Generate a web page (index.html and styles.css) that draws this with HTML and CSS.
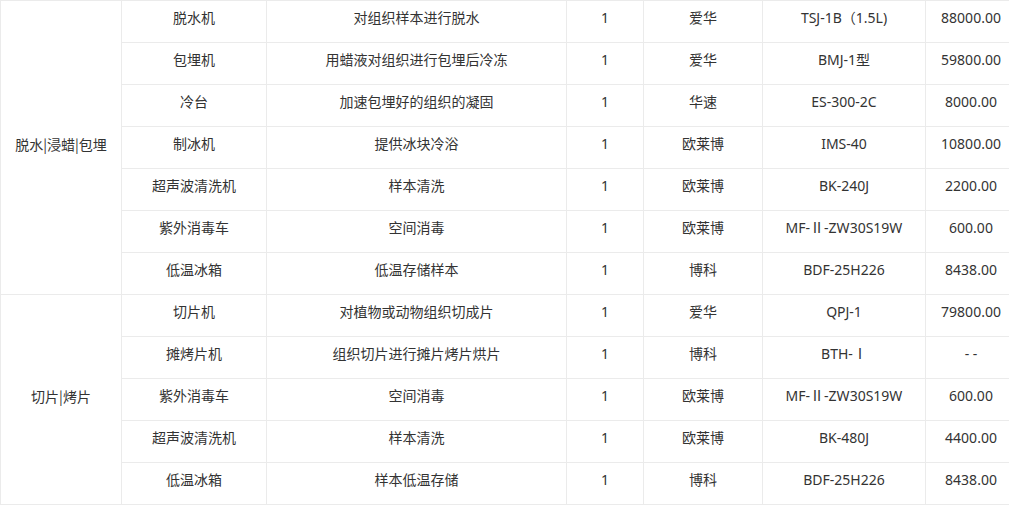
FILE: index.html
```html
<!DOCTYPE html>
<html lang="zh">
<head>
<meta charset="utf-8">
<link rel="stylesheet" href="styles.css">
</head>
<body>
<table class="equip">
  <colgroup>
    <col class="c1"><col class="c2"><col class="c3"><col class="c4"><col class="c5"><col class="c6"><col class="c7">
  </colgroup>
  <tbody>
    <tr><td rowspan="7" class="group">脱水|浸蜡|包埋</td><td>脱水机</td><td>对组织样本进行脱水</td><td>1</td><td>爱华</td><td>TSJ-1B（1.5L)</td><td>88000.00</td></tr>
    <tr><td>包埋机</td><td>用蜡液对组织进行包埋后冷冻</td><td>1</td><td>爱华</td><td>BMJ-1型</td><td>59800.00</td></tr>
    <tr><td>冷台</td><td>加速包埋好的组织的凝固</td><td>1</td><td>华速</td><td>ES-300-2C</td><td>8000.00</td></tr>
    <tr><td>制冰机</td><td>提供冰块冷浴</td><td>1</td><td>欧莱博</td><td>IMS-40</td><td>10800.00</td></tr>
    <tr><td>超声波清洗机</td><td>样本清洗</td><td>1</td><td>欧莱博</td><td>BK-240J</td><td>2200.00</td></tr>
    <tr><td>紫外消毒车</td><td>空间消毒</td><td>1</td><td>欧莱博</td><td>MF-<span class="rn">Ⅱ</span>-ZW30S19W</td><td>600.00</td></tr>
    <tr><td>低温冰箱</td><td>低温存储样本</td><td>1</td><td>博科</td><td>BDF-25H226</td><td>8438.00</td></tr>
    <tr><td rowspan="5" class="group">切片|烤片</td><td>切片机</td><td>对植物或动物组织切成片</td><td>1</td><td>爱华</td><td>QPJ-1</td><td>79800.00</td></tr>
    <tr><td>摊烤片机</td><td>组织切片进行摊片烤片烘片</td><td>1</td><td>博科</td><td>BTH-<span class="rn">Ⅰ</span></td><td>- -</td></tr>
    <tr><td>紫外消毒车</td><td>空间消毒</td><td>1</td><td>欧莱博</td><td>MF-<span class="rn">Ⅱ</span>-ZW30S19W</td><td>600.00</td></tr>
    <tr><td>超声波清洗机</td><td>样本清洗</td><td>1</td><td>欧莱博</td><td>BK-480J</td><td>4400.00</td></tr>
    <tr><td>低温冰箱</td><td>样本低温存储</td><td>1</td><td>博科</td><td>BDF-25H226</td><td>8438.00</td></tr>
  </tbody>
</table>
</body>
</html>
```
FILE: styles.css
```css
html, body {
  margin: 0;
  padding: 0;
  background: #fff;
  overflow: hidden;
}
.equip {
  border-collapse: collapse;
  table-layout: fixed;
  width: 1016px;
  font-family: "Noto Sans", "Noto Sans CJK SC", sans-serif;
  font-size: 14px;
  color: #333;
}
.c1 { width: 121px; }
.c2 { width: 145px; }
.c3 { width: 300px; }
.c4 { width: 77px; }
.c5 { width: 119px; }
.c6 { width: 163px; }
.c7 { width: 91px; }
.equip td {
  border: 1px solid #ebebeb;
  height: 42px;
  padding: 0 4px 8px;
  box-sizing: border-box;
  line-height: 20px;
  text-align: center;
  vertical-align: middle;
  white-space: nowrap;
}
.equip td.group {
  font-family: "Noto Sans CJK SC", sans-serif;
}
.rn {
  font-family: "Noto Sans CJK SC", sans-serif;
}
.equip tr { height: 42px; }
```
